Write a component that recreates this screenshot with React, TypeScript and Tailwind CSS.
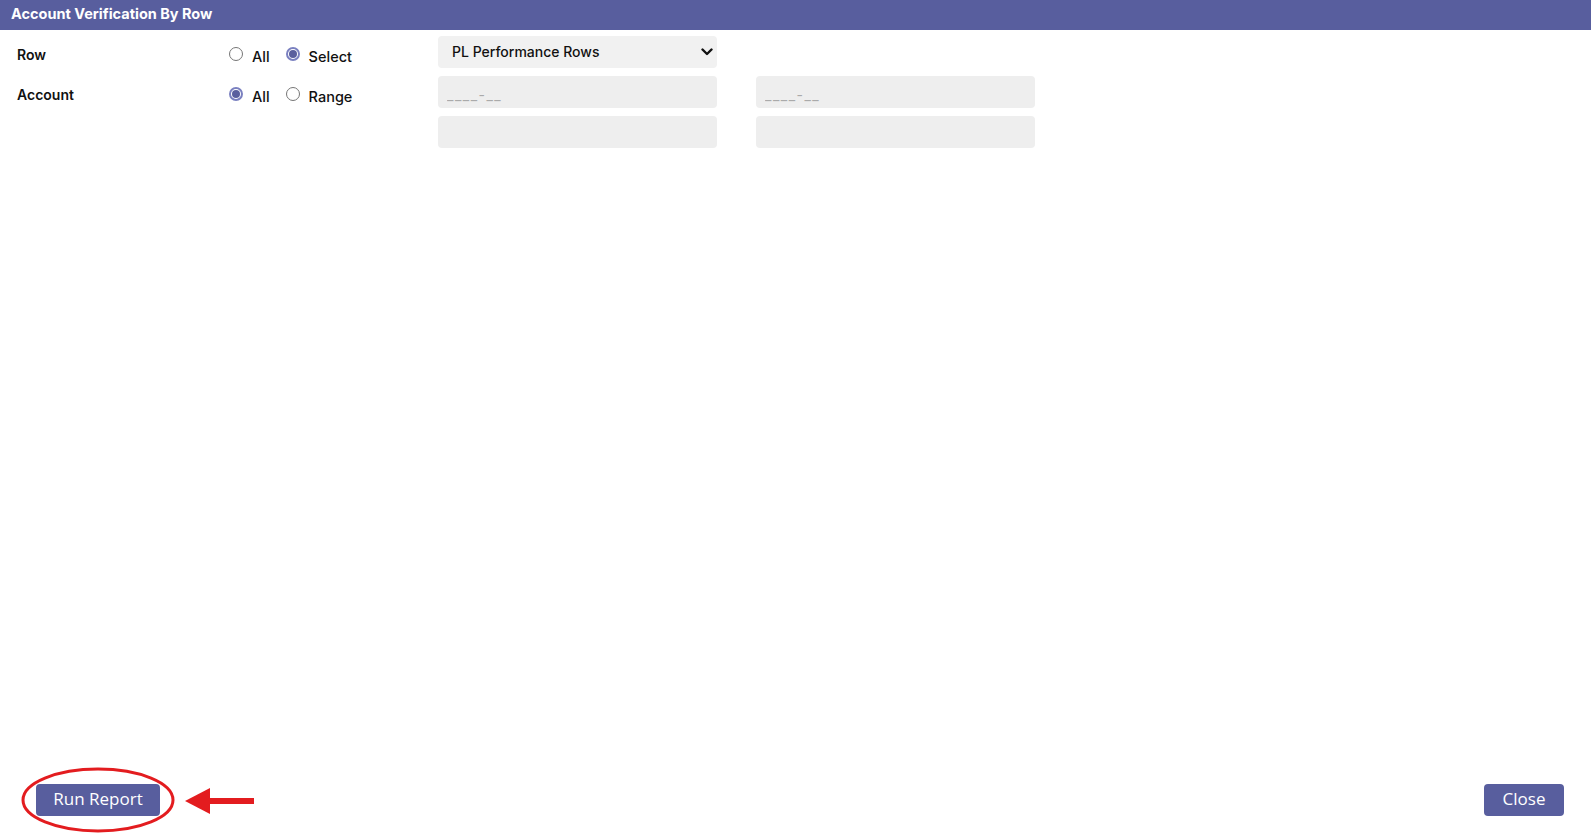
import { useState } from 'react';

function Radio({ checked, label, onClick }: { checked: boolean; label: string; onClick: () => void }) {
  return (
    <button type="button" onClick={onClick} className="flex items-center">
      <span
        className={
          checked
            ? 'flex h-[14px] w-[14px] items-center justify-center rounded-full border-[2px] border-[#7a80c0] bg-white'
            : 'h-[14px] w-[14px] rounded-full border border-[#767676] bg-white'
        }
      >
        {checked && <span className="h-[8px] w-[8px] rounded-full bg-[#5a5f9e]" />}
      </span>
      <span className="ml-[9px] mt-[5px] text-[14.5px] font-medium text-[#111]">{label}</span>
    </button>
  );
}

export default function App() {
  const [rowMode, setRowMode] = useState('select');
  const [accountMode, setAccountMode] = useState('all');

  return (
    <div className="flex h-[834px] flex-col bg-white font-['Inter',sans-serif]">
      <div className="flex h-[30px] items-center bg-[#585e9e] px-[11px] pb-[3px]">
        <h1 className="text-[14.5px] font-bold text-white">Account Verification By Row</h1>
      </div>

      <div className="flex pt-[8px]">
        <div className="flex w-[229px] flex-col pl-[17px]">
          <div className="flex h-[32px] items-center text-[14px] font-semibold text-[#111]">Row</div>
          <div className="mt-[8px] flex h-[32px] items-center text-[14px] font-semibold text-[#111]">Account</div>
        </div>

        <div className="flex w-[209px] flex-col">
          <div className="flex h-[32px] items-center gap-[16px]">
            <Radio checked={rowMode === 'all'} label="All" onClick={() => setRowMode('all')} />
            <Radio checked={rowMode === 'select'} label="Select" onClick={() => setRowMode('select')} />
          </div>
          <div className="mt-[8px] flex h-[32px] items-center gap-[16px]">
            <Radio checked={accountMode === 'all'} label="All" onClick={() => setAccountMode('all')} />
            <Radio checked={accountMode === 'range'} label="Range" onClick={() => setAccountMode('range')} />
          </div>
        </div>

        <div className="-mt-[2px] flex flex-col gap-[8px]">
          <div className="relative h-[32px] w-[279px]">
            <select className="h-full w-full appearance-none rounded-[4px] bg-[#f1f1f1] pb-[2px] pl-[14px] text-[14px] font-medium text-[#111] outline-none">
              <option>PL Performance Rows</option>
            </select>
            <svg
              className="pointer-events-none absolute right-[4px] top-[11px]"
              width="12"
              height="10"
              viewBox="0 0 12 10"
              fill="none"
            >
              <path d="M1.5 2.5 L6 7 L10.5 2.5" stroke="#111" strokeWidth="2.4" strokeLinecap="round" strokeLinejoin="round" />
            </svg>
          </div>
          <div className="flex gap-[39px]">
            <input
              placeholder="____-__"
              className="h-[32px] w-[279px] rounded-[4px] bg-[#eeeeee] px-[9px] pt-[4px] text-[14px] tracking-[1.5px] text-[#111] outline-none placeholder:text-[#aaa]"
            />
            <input
              placeholder="____-__"
              className="h-[32px] w-[279px] rounded-[4px] bg-[#eeeeee] px-[9px] pt-[4px] text-[14px] tracking-[1.5px] text-[#111] outline-none placeholder:text-[#aaa]"
            />
          </div>
          <div className="flex gap-[39px]">
            <input className="h-[32px] w-[279px] rounded-[4px] bg-[#eeeeee] px-[9px] text-[13px] outline-none" />
            <input className="h-[32px] w-[279px] rounded-[4px] bg-[#eeeeee] px-[9px] text-[13px] outline-none" />
          </div>
        </div>
      </div>

      <div className="flex-1" />

      <div className="flex items-center justify-between pb-[18px] pl-[36px] pr-[27px]">
        <div className="relative flex items-center">
          <button className="h-[32px] w-[124px] rounded-[4px] bg-[#585e9e] pb-[2px] font-['Open_Sans',sans-serif] text-[17px] font-medium text-white">
            Run Report
          </button>
          <svg
            className="pointer-events-none absolute left-[-16px] top-[-17px]"
            width="156"
            height="66"
            viewBox="0 0 156 66"
            fill="none"
          >
            <ellipse cx="78" cy="33" rx="75" ry="31" stroke="#e31c1f" strokeWidth="3" />
          </svg>
          <svg className="ml-[25px] mt-[2px]" width="70" height="26" viewBox="0 0 70 26" fill="none">
            <polygon points="0,13 25,0 25,26" fill="#e31c1f" />
            <rect x="22" y="10" width="47" height="6" fill="#e31c1f" />
          </svg>
        </div>
        <button className="h-[32px] w-[80px] rounded-[4px] bg-[#585e9e] pb-[2px] font-['Open_Sans',sans-serif] text-[17px] font-medium text-white">
          Close
        </button>
      </div>
    </div>
  );
}
